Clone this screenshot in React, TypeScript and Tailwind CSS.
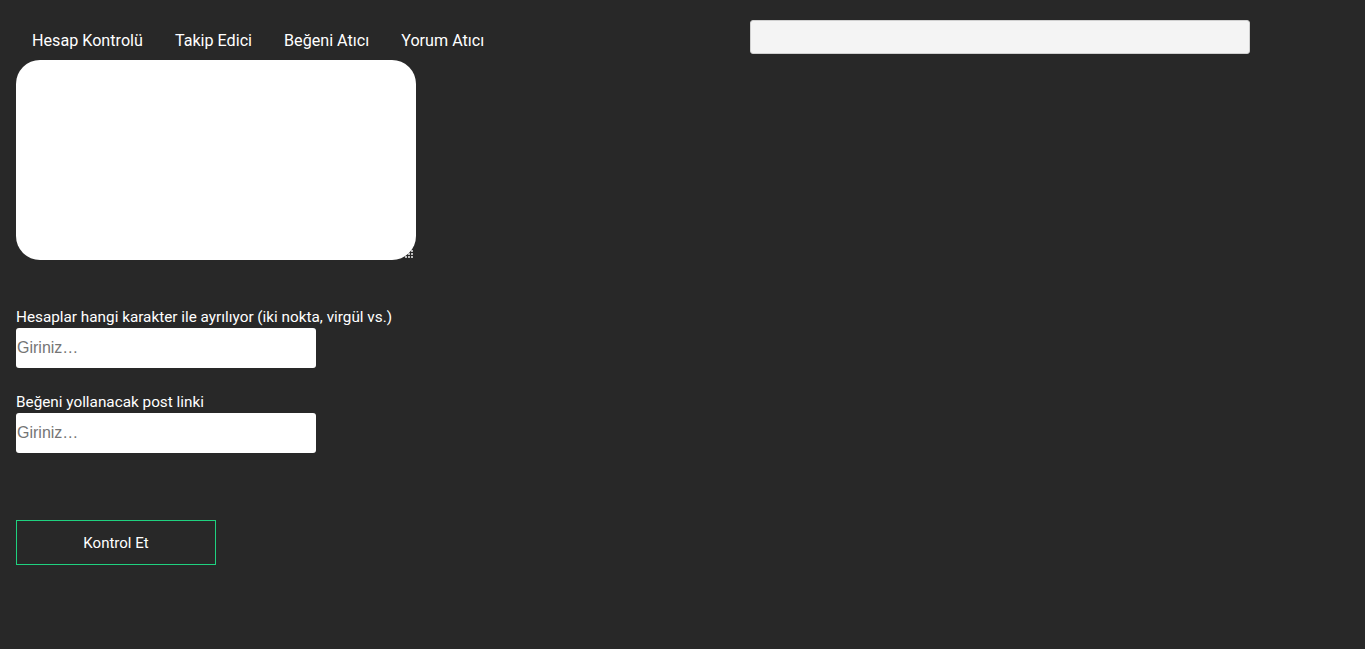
import React from "react";

const navItems = ["Hesap Kontrolü", "Takip Edici", "Beğeni Atıcı", "Yorum Atıcı"];

// small dotted resize grip in the textarea's lower-right corner
function Grip() {
  const cells: [number, number][] = [
    [6, 0],
    [3, 3],
    [6, 3],
    [0, 6],
    [3, 6],
    [6, 6],
  ];
  return (
    <svg
      width="9"
      height="9"
      viewBox="0 0 9 9"
      className="pointer-events-none absolute right-[2px] bottom-[1px]"
    >
      {cells.map(([x, y]) => (
        <rect key={`${x}-${y}`} x={x} y={y} width="2" height="2" fill="#bdbdbd" />
      ))}
    </svg>
  );
}

export default function App() {
  return (
    <div
      className="min-h-[649px] w-full bg-[#282828] text-white"
      style={{ fontFamily: "Roboto, 'Noto Sans', sans-serif" }}
    >
      <div className="flex px-4">
        {/* left column: tabs + form */}
        <div className="flex w-[520px] flex-col">
          <nav className="flex pt-[30px]">
            {navItems.map((item) => (
              <a
                key={item}
                className="cursor-pointer px-4 text-[16.15px] leading-[22px] text-white"
              >
                {item}
              </a>
            ))}
          </nav>
          <div className="relative mt-[8px] h-[200px] w-[400px]">
            <textarea className="block h-[200px] w-[400px] resize-none rounded-[24px] bg-white p-3 text-black outline-none" />
            <Grip />
          </div>

          <label className="mt-[48px] block text-[15.3px] leading-[18px] text-white">
            Hesaplar hangi karakter ile ayrılıyor (iki nokta, virgül vs.)
          </label>
          <input
            placeholder="Giriniz…"
            className="mt-[2px] h-[40px] w-[300px] rounded-[3px] bg-white px-[1px] text-[16px] text-black outline-none placeholder:text-[#757575]"
            style={{ fontFamily: "'Liberation Sans', Arial, sans-serif" }}
          />

          <label className="mt-[25px] block text-[15.3px] leading-[18px] text-white">
            Beğeni yollanacak post linki
          </label>
          <input
            placeholder="Giriniz…"
            className="mt-[2px] h-[40px] w-[300px] rounded-[3px] bg-white px-[1px] text-[16px] text-black outline-none placeholder:text-[#757575]"
            style={{ fontFamily: "'Liberation Sans', Arial, sans-serif" }}
          />

          <button className="mt-[67px] h-[45px] w-[200px] border border-[#1fd17f] bg-transparent pt-[1px] text-[15px] text-white">
            Kontrol Et
          </button>
        </div>

        {/* right column: search field */}
        <div className="ml-[214px] pt-5">
          <input className="h-[34px] w-[500px] rounded-[3px] border border-[#d0d0d0] bg-[#f4f4f4] px-2 text-black outline-none" />
        </div>
      </div>
    </div>
  );
}
